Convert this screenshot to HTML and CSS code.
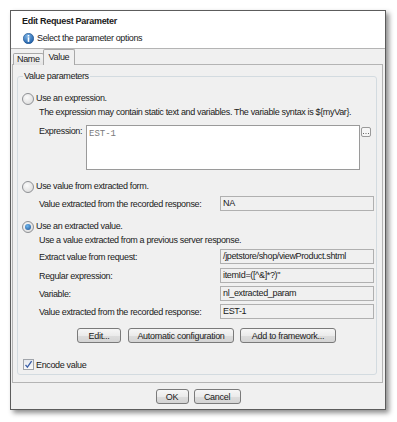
FILE: index.html
```html
<!DOCTYPE html>
<html lang="en">
<head>
    <meta charset="UTF-8">
    <title>Edit Request Parameter</title>
    <link rel="stylesheet" href="styles.css">
</head>
<body>
<div class="dialog">
    <!-- 헤더 -->
    <div class="header">
        <div class="title">Edit Request Parameter</div>
        <div class="subtitle">
            <svg class="info-icon" width="11" height="11" viewBox="0 0 11 11">
                <defs>
                    <radialGradient id="ig" cx="0.4" cy="0.3" r="0.7">
                        <stop offset="0" stop-color="#7fb6e8"/>
                        <stop offset="1" stop-color="#1f5fa8"/>
                    </radialGradient>
                </defs>
                <circle cx="5.5" cy="5.5" r="5.2" fill="url(#ig)" stroke="#1b4f8c" stroke-width="0.6"/>
                <rect x="4.7" y="2" width="1.6" height="1.5" fill="#fff"/>
                <rect x="4.7" y="4.3" width="1.6" height="4.6" fill="#fff"/>
            </svg>
            <span>Select the parameter options</span>
        </div>
    </div>

    <!-- 탭 -->
    <div class="tabs">
        <div class="tab">Name</div>
        <div class="tab active">Value</div>
    </div>

    <div class="tab-panel">
        <fieldset class="group">
            <legend>Value parameters</legend>

            <div class="radio-row first">
                <span class="radio"></span>
                <span>Use an expression.</span>
            </div>
            <div class="desc">The expression may contain static text and variables. The variable syntax is ${myVar}.</div>
            <div class="expr-row">
                <span class="expr-label">Expression:</span>
                <div class="textarea">EST-1</div>
                <div class="dots-btn">
                    <svg width="8" height="8" viewBox="0 0 8 8">
                        <rect x="1" y="5" width="1" height="1" fill="#666"/>
                        <rect x="3.5" y="5" width="1" height="1" fill="#666"/>
                        <rect x="6" y="5" width="1" height="1" fill="#666"/>
                    </svg>
                </div>
            </div>

            <div class="radio-row second">
                <span class="radio"></span>
                <span>Use value from extracted form.</span>
            </div>
            <div class="field-row form-row">
                <span class="field-label">Value extracted from the recorded response:</span>
                <div class="field">NA</div>
            </div>

            <div class="radio-row third">
                <span class="radio checked"></span>
                <span>Use an extracted value.</span>
            </div>
            <div class="desc">Use a value extracted from a previous server response.</div>
            <div class="field-row r1">
                <span class="field-label">Extract value from request:</span>
                <div class="field">/jpetstore/shop/viewProduct.shtml</div>
            </div>
            <div class="field-row r2">
                <span class="field-label">Regular expression:</span>
                <div class="field">itemId=([^&amp;]*?)"</div>
            </div>
            <div class="field-row r3">
                <span class="field-label">Variable:</span>
                <div class="field">nl_extracted_param</div>
            </div>
            <div class="field-row r3">
                <span class="field-label">Value extracted from the recorded response:</span>
                <div class="field">EST-1</div>
            </div>

            <div class="action-row">
                <button class="btn btn-edit">Edit...</button>
                <button class="btn btn-auto">Automatic configuration</button>
                <button class="btn btn-add">Add to framework...</button>
            </div>

            <div class="check-row">
                <span class="checkbox">
                    <svg width="9" height="9" viewBox="0 0 9 9">
                        <path d="M1.5 4.8 L3.4 7.2 L7.6 1.2" fill="none" stroke="#3a5fa8" stroke-width="1.3"/>
                    </svg>
                </span>
                <span>Encode value</span>
            </div>
        </fieldset>
    </div>

    <!-- 하단 버튼 -->
    <div class="footer">
        <button class="btn btn-ok">OK</button>
        <button class="btn btn-cancel">Cancel</button>
    </div>
</div>
</body>
</html>
```

FILE: styles.css
```css
* {
    margin: 0;
    padding: 0;
    box-sizing: border-box;
}

body {
    font-family: "Liberation Sans", Arial, sans-serif;
    font-size: 9px;
    letter-spacing: -0.35px;
    color: #1a1a1a;
    background: #ffffff;
}

.dialog {
    margin: 10px;
    width: 376px;
    height: 400px;
    border: 1px solid #5c5c5c;
    background: #f0f0f0;
    box-shadow: 3px 3px 5px rgba(0, 0, 0, 0.45);
    display: flex;
    flex-direction: column;
}

/* 헤더 */
.header {
    height: 38px;
    background: #ffffff;
    border-bottom: 1px solid #b4b4b4;
    padding: 4px 0 0 11px;
}

.title {
    font-weight: bold;
    line-height: 12px;
    letter-spacing: -0.3px;
}

.subtitle {
    display: flex;
    align-items: center;
    gap: 3px;
    margin-top: 5px;
    padding-left: 1px;
    line-height: 12px;
}

/* 탭 */
.tabs {
    display: flex;
    align-items: flex-end;
    height: 16px;
    padding-left: 2px;
    margin-bottom: -1px;
}

.tab {
    height: 12px;
    padding: 0 3px;
    line-height: 11px;
    border: 1px solid #a8a8a8;
    border-bottom: none;
    background: linear-gradient(#f4f4f4, #e4e4e4);
    border-radius: 2px 2px 0 0;
    position: relative;
    z-index: 1;
}

.tab.active {
    height: 16px;
    padding: 2px 5px 0;
    background: #f0f0f0;
    margin-left: -1px;
    z-index: 2;
}

.tab-panel {
    margin: 0 2px 0 1px;
    height: 319px;
    border: 1px solid #b4b4b4;
    padding: 5px 5px 0 4px;
}

.group {
    border: 1px solid #d3dbe0;
    border-radius: 3px;
    padding: 0 2px 0 4px;
    height: 305px;
}

.group legend {
    margin-left: 1px;
    padding: 0 1px;
    line-height: 12px;
}

/* 라디오 */
.radio-row {
    display: flex;
    align-items: center;
    gap: 1px;
    height: 13px;
    line-height: 13px;
}

.radio-row.first { margin-top: 10px; }
.radio-row.second { margin-top: 10px; }
.radio-row.third { margin-top: 9px; }

.radio {
    width: 12px;
    height: 12px;
    border-radius: 50%;
    border: 1px solid #8e9094;
    background: radial-gradient(circle at 40% 35%, #fbfbfb, #d6d6d6);
    margin-right: 1px;
    display: flex;
    align-items: center;
    justify-content: center;
}

.radio.checked::after {
    content: "";
    width: 6px;
    height: 6px;
    border-radius: 50%;
    background: radial-gradient(circle at 40% 35%, #6fb8f0, #1d4f8f);
}

.desc {
    padding-left: 17px;
    height: 13px;
    line-height: 13px;
    margin-top: 1px;
}

/* 표현식 */
.expr-row {
    display: grid;
    grid-template-columns: 46px 274px 10px;
    column-gap: 1px;
    align-items: start;
    margin-top: 6px;
    padding-left: 17px;
}

.expr-label {
    line-height: 12px;
}

.textarea {
    height: 45px;
    border: 1px solid #9a9a9a;
    background: #ffffff;
    font-family: "Liberation Mono", monospace;
    font-size: 9px;
    letter-spacing: 0;
    color: #7a7a7a;
    padding: 3px 2px;
}

.dots-btn {
    width: 10px;
    height: 10px;
    margin-top: 2px;
    border: 1px solid #9a9a9a;
    border-radius: 2px;
    background: #f6f6f6;
    display: flex;
    align-items: center;
    justify-content: center;
}

/* 필드 */
.field-row {
    display: flex;
    align-items: center;
    padding-left: 17px;
    height: 15px;
}

.form-row { margin-top: 3px; }
.r1 { margin-top: 2px; }
.r2 { margin-top: 4px; }
.r3 { margin-top: 3px; }

.field-label {
    width: 181px;
}

.field {
    flex: 1;
    height: 15px;
    line-height: 13px;
    border: 1px solid #b0b0b0;
    background: #f0f0f0;
    padding-left: 2px;
}

/* 버튼 */
.btn {
    font-family: inherit;
    font-size: 9px;
    letter-spacing: -0.3px;
    color: #1a1a1a;
    height: 15px;
    border: 1px solid #7a7a7a;
    border-radius: 3px;
    background: linear-gradient(#f6f6f6 0%, #ebebeb 50%, #dddddd 51%, #d4d4d4 100%);
}

.action-row {
    display: flex;
    margin-top: 9px;
    padding-left: 55px;
}

.btn-edit { width: 44px; }
.btn-auto { width: 106px; margin-left: 7px; }
.btn-add { width: 96px; margin-left: 6px; }

.check-row {
    display: flex;
    align-items: center;
    gap: 2px;
    height: 13px;
    margin-top: 15px;
    padding-left: 1px;
}

.checkbox {
    width: 11px;
    height: 11px;
    border: 1px solid #a0a4aa;
    background: linear-gradient(#e4e8ee, #fafafa);
    display: flex;
    align-items: center;
    justify-content: center;
}

/* 하단 */
.footer {
    display: flex;
    justify-content: center;
    gap: 5px;
    padding-top: 6px;
}

.btn-ok { width: 33px; }
.btn-cancel { width: 47px; }
```
